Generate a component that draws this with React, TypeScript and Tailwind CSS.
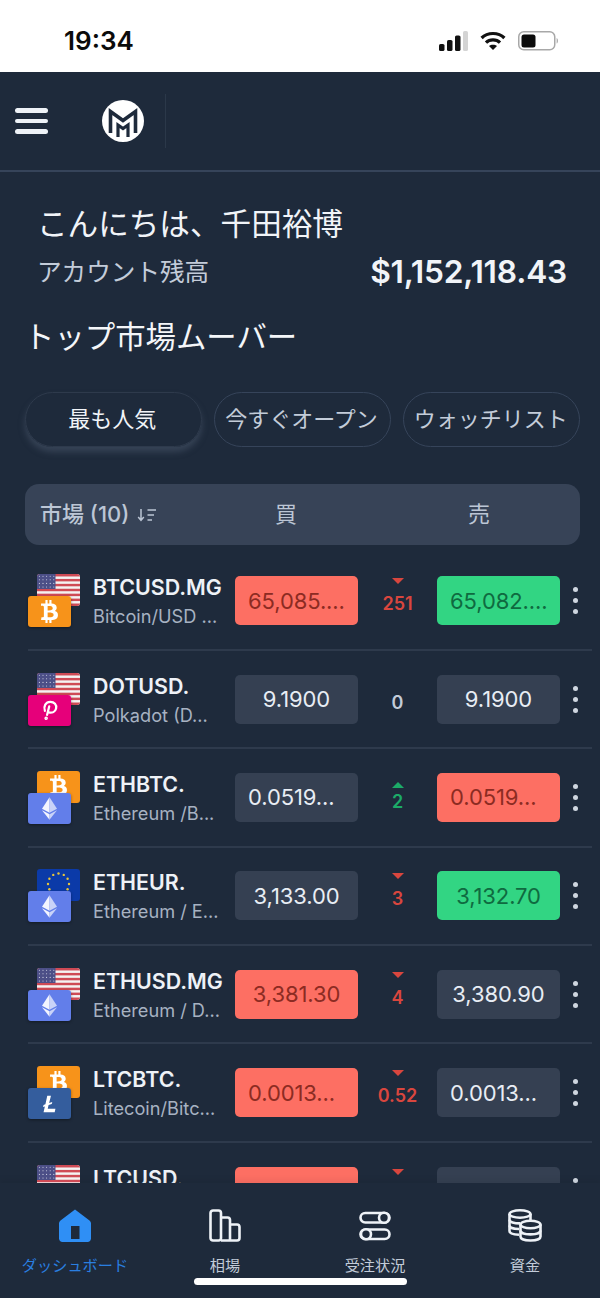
import { FaBtc } from "react-icons/fa";

type Coin = "usd" | "eur" | "btc" | "dot" | "eth" | "ltc";
type Tone = "red" | "green" | "plain";

interface Market {
  name: string;
  desc: string;
  back: Coin;
  front: Coin;
  buy: string;
  buyTone: Tone;
  sell: string;
  sellTone: Tone;
  change: string;
  dir: "up" | "down" | "none";
}

const markets: Market[] = [
  { name: "BTCUSD.MG", desc: "Bitcoin/USD ...", back: "usd", front: "btc", buy: "65,085....", buyTone: "red", sell: "65,082....", sellTone: "green", change: "251", dir: "down" },
  { name: "DOTUSD.", desc: "Polkadot (D...", back: "usd", front: "dot", buy: "9.1900", buyTone: "plain", sell: "9.1900", sellTone: "plain", change: "0", dir: "none" },
  { name: "ETHBTC.", desc: "Ethereum /B...", back: "btc", front: "eth", buy: "0.0519...", buyTone: "plain", sell: "0.0519...", sellTone: "red", change: "2", dir: "up" },
  { name: "ETHEUR.", desc: "Ethereum / E...", back: "eur", front: "eth", buy: "3,133.00", buyTone: "plain", sell: "3,132.70", sellTone: "green", change: "3", dir: "down" },
  { name: "ETHUSD.MG", desc: "Ethereum / D...", back: "usd", front: "eth", buy: "3,381.30", buyTone: "red", sell: "3,380.90", sellTone: "plain", change: "4", dir: "down" },
  { name: "LTCBTC.", desc: "Litecoin/Bitc...", back: "btc", front: "ltc", buy: "0.0013...", buyTone: "red", sell: "0.0013...", sellTone: "plain", change: "0.52", dir: "down" },
  // last row is cut off by the nav bar, only its top shows
  { name: "LTCUSD.", desc: "", back: "usd", front: "ltc", buy: "", buyTone: "red", sell: "", sellTone: "plain", change: "", dir: "down" },
];

function UsFlag() {
  const stars = [];
  for (let r = 0; r < 4; r++) {
    for (let c = 0; c < 5; c++) {
      stars.push(<circle key={`${r}-${c}`} cx={2.4 + c * 3.6} cy={2.2 + r * 3.6} r="0.55" fill="#d5d8e6" />);
    }
  }
  return (
    <svg viewBox="0 0 43 32" className="w-full h-full" preserveAspectRatio="none">
      <rect width="43" height="32" fill="#f4f2f2" />
      {[0, 1, 2, 3, 4, 5, 6].map((i) => (
        <rect key={i} y={i * 4.92} width="43" height="2.46" fill="#cf4a55" />
      ))}
      <rect width="18.5" height="15" fill="#4c4f87" />
      {stars}
    </svg>
  );
}

function EuFlag() {
  const dots = [];
  for (let i = 0; i < 12; i++) {
    const a = (i / 12) * Math.PI * 2;
    dots.push(<circle key={i} cx={21.5 + Math.cos(a) * 10.5} cy={15 + Math.sin(a) * 10.5} r="1.2" fill="#e8c53a" />);
  }
  return (
    <svg viewBox="0 0 43 32" className="w-full h-full">
      <rect width="43" height="32" fill="#0b3aa8" />
      {dots}
    </svg>
  );
}

function Tile({ coin }: { coin: Coin }) {
  if (coin === "usd") return <UsFlag />;
  if (coin === "eur") return <EuFlag />;
  if (coin === "btc") {
    return (
      <div className="w-full h-full bg-[#f7931a] flex items-center justify-center text-white">
        <FaBtc size={23} />
      </div>
    );
  }
  if (coin === "dot") {
    return (
      <div className="w-full h-full bg-[#e6007a] flex items-center justify-center">
        <svg viewBox="0 0 20 24" className="w-[16px] h-[20px]" fill="none" stroke="#fff" strokeWidth="2.8" strokeLinecap="round">
          <path d="M9 7.5 L6.4 18" />
          <path d="M3.6 13 C1.6 7.5 4.6 1.8 10.4 1.8 C15.4 1.8 18.6 5.6 17.6 10 C16.6 14.2 12.6 15.8 8.6 15" />
          <circle cx="5.2" cy="22.2" r="0.8" fill="#fff" />
        </svg>
      </div>
    );
  }
  if (coin === "eth") {
    return (
      <div className="w-full h-full bg-[#627eea] flex items-center justify-center">
        <svg viewBox="0 0 16 24" className="w-[15px] h-[23px]">
          <polygon points="8,0 0,12.2 8,16.5" fill="#f2f4fe" />
          <polygon points="8,0 16,12.2 8,16.5" fill="#c9d3f8" />
          <polygon points="0,13.8 8,24 8,18.2" fill="#f2f4fe" />
          <polygon points="16,13.8 8,24 8,18.2" fill="#c9d3f8" />
        </svg>
      </div>
    );
  }
  return (
    <div className="w-full h-full bg-[#345d9d] flex items-center justify-center">
      <svg viewBox="0 0 14 18" className="w-[13px] h-[18px]" fill="#fff">
        <path d="M4.6 0 H8.6 L6.6 8 L10 6.8 L9.4 9 L6 10.2 L5.1 14.2 H13.4 L12.6 18 H0.6 L2 11.6 L0 12.3 L0.6 10.2 L2.6 9.4 Z" />
      </svg>
    </div>
  );
}

function CoinPair({ back, front }: { back: Coin; front: Coin }) {
  return (
    <div className="relative w-[65px] h-[53px] shrink-0">
      <div className="absolute left-[9px] top-0 w-[43px] h-[32px] rounded-[3px] overflow-hidden">
        <Tile coin={back} />
      </div>
      <div className="absolute left-0 top-[22px] w-[43px] h-[31px] rounded-[3px] overflow-hidden shadow-[0_1px_3px_rgba(0,0,0,0.4)]">
        <Tile coin={front} />
      </div>
    </div>
  );
}

function PriceBox({ value, tone }: { value: string; tone: Tone }) {
  const toneClass =
    tone === "red"
      ? "bg-[#fd6f63] text-[#8c2b22]"
      : tone === "green"
        ? "bg-[#32d583] text-[#0f6a40]"
        : "bg-[#354052] text-[#e8edf4]";
  // truncated prices sit at the left padding, whole ones are centred
  const align = value.endsWith("...") ? "justify-start pl-[13px]" : "justify-center";
  return (
    <div className={`w-[123px] h-[49px] shrink-0 rounded-[5px] flex items-center text-[22px] leading-none tracking-[-0.1px] ${align} ${toneClass}`}>
      {value}
    </div>
  );
}

function Change({ value, dir }: { value: string; dir: Market["dir"] }) {
  const color = dir === "down" ? "text-[#d9463e]" : dir === "up" ? "text-[#1cab68]" : "text-[#c2cbd8]";
  return (
    <div className={`w-[79px] h-[49px] shrink-0 flex flex-col items-center ${dir === "up" ? "pt-[9px]" : "pt-[2px]"} ${color}`}>
      <div className="h-[7px] flex justify-center">
        {dir === "down" && <div className="w-0 h-0 border-x-[6px] border-x-transparent border-t-[6px] border-t-[#d9463e]" />}
        {dir === "up" && <div className="w-0 h-0 border-x-[6px] border-x-transparent border-b-[6px] border-b-[#1cab68]" />}
      </div>
      <div className={`${dir === "up" ? "mt-[2px]" : "mt-[8px]"} text-[18px] leading-[22px] font-semibold`}>{value}</div>
    </div>
  );
}

function MarketRow({ m }: { m: Market }) {
  return (
    <div className="h-[98.4px] shrink-0 flex items-center border-b-2 border-[#2e3a4c]">
      <CoinPair back={m.back} front={m.front} />
      <div className="w-[142px] h-[61px] shrink-0 pt-[3px]">
        <div className="text-[21.4px] leading-[29px] font-semibold text-[#eef2f7] whitespace-nowrap">{m.name}</div>
        <div className="text-[18.2px] leading-[29px] text-[#a7b2c2] whitespace-nowrap">{m.desc}</div>
      </div>
      <PriceBox value={m.buy} tone={m.buyTone} />
      <Change value={m.change} dir={m.dir} />
      <PriceBox value={m.sell} tone={m.sellTone} />
      <div className="w-[30px] shrink-0 flex flex-col items-center gap-[6px]">
        <span className="w-[5px] h-[5px] rounded-full bg-[#cfd6e0]" />
        <span className="w-[5px] h-[5px] rounded-full bg-[#cfd6e0]" />
        <span className="w-[5px] h-[5px] rounded-full bg-[#cfd6e0]" />
      </div>
    </div>
  );
}

function StatusBar() {
  return (
    <div className="h-[72px] shrink-0 bg-white flex items-center justify-between pl-[64px] pr-[41px] pt-[9px]">
      <span className="text-[26px] leading-none font-semibold text-[#0b0b0b]">19:34</span>
      <div className="flex items-center gap-[12px]">
        <svg width="29" height="20" viewBox="0 0 29 20">
          <rect x="0" y="13" width="5.5" height="7" rx="1.6" fill="#111" />
          <rect x="8" y="9" width="5.5" height="11" rx="1.6" fill="#111" />
          <rect x="16" y="4.5" width="5.5" height="15.5" rx="1.6" fill="#111" />
          <rect x="24" y="0" width="5" height="20" rx="1.6" fill="#d4d4d4" />
        </svg>
        <svg width="26" height="20" viewBox="0 0 26 20" fill="none" stroke="#111" strokeWidth="3.2">
          <path d="M1.6 7 C7.6 1 18.4 1 24.4 7" />
          <path d="M6 11.6 C9.6 8 16.4 8 20 11.6" />
          <path d="M13 19 L9 15 C11 13.2 15 13.2 17 15 Z" fill="#111" stroke="none" />
        </svg>
        <svg width="41" height="20" viewBox="0 0 41 20">
          <rect x="0.75" y="0.75" width="36" height="18" rx="5" fill="none" stroke="#a8a8a8" strokeWidth="1.5" />
          <rect x="3.5" y="3.5" width="14" height="13" rx="2.5" fill="#0b0b0b" />
          <path d="M38.6 7 C40.4 7.6 40.4 12 38.6 12.6 Z" fill="#a8a8a8" />
        </svg>
      </div>
    </div>
  );
}

function TopBar() {
  return (
    <div className="h-[100px] shrink-0 flex items-center border-b-2 border-[#36445a] pl-[15px]">
      <div className="w-[33px] flex flex-col gap-[6px]">
        <span className="h-[4.5px] rounded-full bg-[#eef2f7]" />
        <span className="h-[4.5px] rounded-full bg-[#eef2f7]" />
        <span className="h-[4.5px] rounded-full bg-[#eef2f7]" />
      </div>
      <svg viewBox="0 0 42 42" className="w-[42px] h-[42px] ml-[54px]">
        <circle cx="21" cy="21" r="21" fill="#fff" />
        <path d="M8.5 33 V11.5 L21 20.5 L33.5 11.5 V33" fill="none" stroke="#1e2a3b" strokeWidth="3.6" />
        <path d="M16 37 V25 L21 28.6 L26 25 V37" fill="none" stroke="#1e2a3b" strokeWidth="3.2" />
      </svg>
      <div className="w-px h-[54px] bg-[#2b3849] ml-[21px]" />
    </div>
  );
}

function Tabs() {
  const base = "flex-1 h-[55px] rounded-full flex items-center justify-center pb-[2px] pr-[2px] text-[22px] leading-none whitespace-nowrap";
  return (
    <div className="flex gap-[12.5px] mt-[35px]">
      <div className={`${base} border border-[#2e3a4c] text-[#f1f4f8] shadow-[0_5px_6px_rgba(70,84,104,0.6)]`}>最も人気</div>
      <div className={`${base} border border-[#36445a] text-[#c3ccd9]`}>今すぐオープン</div>
      <div className={`${base} border border-[#36445a] text-[#c3ccd9]`}>ウォッチリスト</div>
    </div>
  );
}

function TableHead() {
  return (
    <div className="mt-[37px] h-[61px] rounded-[14px] bg-[#374357] flex items-center text-[#bcc6d5] text-[22px]">
      <div className="w-[207px] pl-[15px] flex items-center gap-[8px] whitespace-nowrap">
        <span className="font-medium">市場 (10)</span>
        <svg width="20" height="14" viewBox="0 0 20 14" fill="none" stroke="#bcc6d5" strokeWidth="1.5">
          <path d="M4 1 V12 M1.2 9 L4 12.4 L6.8 9" />
          <path d="M10.5 2 H19 M10.5 7 H17 M10.5 12 H15" />
        </svg>
      </div>
      <div className="w-[108px] text-center">買</div>
      <div className="w-[85px]" />
      <div className="w-[108px] text-center">売</div>
    </div>
  );
}

function NavItem({ label, active, children }: { label: string; active?: boolean; children: React.ReactNode }) {
  return (
    <div className="flex flex-col items-center">
      <div className="h-[34px] flex items-center justify-center">{children}</div>
      <div className={`mt-[14px] text-[15.2px] leading-[20px] whitespace-nowrap ${active ? "text-[#2a7fe0]" : "text-[#c3ccd9]"}`}>{label}</div>
    </div>
  );
}

function BottomNav() {
  return (
    <div className="h-[115px] shrink-0 grid grid-cols-4 pt-[25px] bg-[#1e2a3b] shadow-[0_-4px_6px_rgba(0,0,0,0.05)]">
      <NavItem label="ダッシュボード" active>
        <svg width="32" height="33" viewBox="0 0 32 33">
          <path fillRule="evenodd" fill="#2f8ff5" d="M16 0.5 L30.5 11.5 C31.5 12.3 32 13.4 32 14.6 V29.5 C32 31.4 30.5 33 28.5 33 H3.5 C1.5 33 0 31.4 0 29.5 V14.6 C0 13.4 0.5 12.3 1.5 11.5 Z M12 17 V30 H20.5 V17 Z" />
        </svg>
      </NavItem>
      <NavItem label="相場">
        <svg width="32" height="33" viewBox="0 0 32 33" fill="none" stroke="#eef2f7" strokeWidth="2.6" strokeLinejoin="round">
          <rect x="1.5" y="1.5" width="10.5" height="30" rx="2.5" />
          <path d="M12 8.5 H18.5 C20 8.5 21 9.5 21 11 V31.5" />
          <path d="M21 15.5 H28 C29.4 15.5 30.5 16.6 30.5 18 V29 C30.5 30.4 29.4 31.5 28 31.5 H12" />
        </svg>
      </NavItem>
      <NavItem label="受注状況">
        <svg width="32" height="33" viewBox="0 0 32 33" fill="none" stroke="#eef2f7" strokeWidth="2.6">
          <rect x="1.5" y="4" width="29" height="9.5" rx="4.75" />
          <circle cx="25" cy="8.75" r="5" fill="#1e2a3b" />
          <rect x="1.5" y="20.5" width="29" height="9.5" rx="4.75" />
          <circle cx="7" cy="25.25" r="5" fill="#1e2a3b" />
        </svg>
      </NavItem>
      <NavItem label="資金">
        <svg width="34" height="33" viewBox="0 0 34 33" fill="none" stroke="#eef2f7" strokeWidth="2.6">
          <ellipse cx="12" cy="5" rx="10.5" ry="3.7" />
          <path d="M1.5 5 V22 C1.5 24 4.5 25.5 11 25.8" />
          <path d="M22.5 5 V11" />
          <path d="M1.5 10.7 C1.5 13 6 14.4 12 14.4 M1.5 16.4 C1.5 18.6 5.5 20 11 20" />
          <ellipse cx="22.5" cy="15.5" rx="10" ry="3.7" />
          <path d="M12.5 15.5 V27.5 C12.5 30 17 31.5 22.5 31.5 C28 31.5 32.5 30 32.5 27.5 V15.5" />
          <path d="M12.5 21.5 C12.5 24 17 25.4 22.5 25.4 C28 25.4 32.5 24 32.5 21.5" />
        </svg>
      </NavItem>
    </div>
  );
}

export default function App() {
  return (
    <div className="relative w-[600px] h-[1298px] flex flex-col overflow-hidden bg-[#1e2a3b] [font-family:Inter,'Noto_Sans_CJK_JP',sans-serif]">
      <StatusBar />
      <TopBar />
      <div className="flex-1 min-h-0 flex flex-col overflow-hidden">
        <div className="shrink-0 pl-[25px] pr-[20px] pt-[32px]">
          <div className="pl-[12px] text-[30.6px] leading-[40px] text-[#f1f4f8] whitespace-nowrap">こんにちは、千田裕博</div>
          <div className="mt-[8px] h-[40px] flex items-center justify-between pl-[12px] pr-[13px]">
            <span className="text-[24.6px] text-[#c3ccd9]">アカウント残高</span>
            <span className="text-[31.7px] font-semibold text-[#f1f4f8] tracking-[-0.2px]">$1,152,118.43</span>
          </div>
          <div className="mt-[25px] -ml-[1px] text-[30.4px] leading-[40px] text-[#f4f6f9] whitespace-nowrap">トップ市場ムーバー</div>
          <Tabs />
          <TableHead />
        </div>
        <div className="flex-1 min-h-0 overflow-hidden mt-[7.5px] pl-[28px] pr-[8px] flex flex-col">
          {markets.map((m) => (
            <MarketRow key={m.name} m={m} />
          ))}
        </div>
      </div>
      <BottomNav />
      <div className="absolute left-[194px] bottom-[13px] w-[213px] h-[7px] rounded-full bg-white" />
    </div>
  );
}
